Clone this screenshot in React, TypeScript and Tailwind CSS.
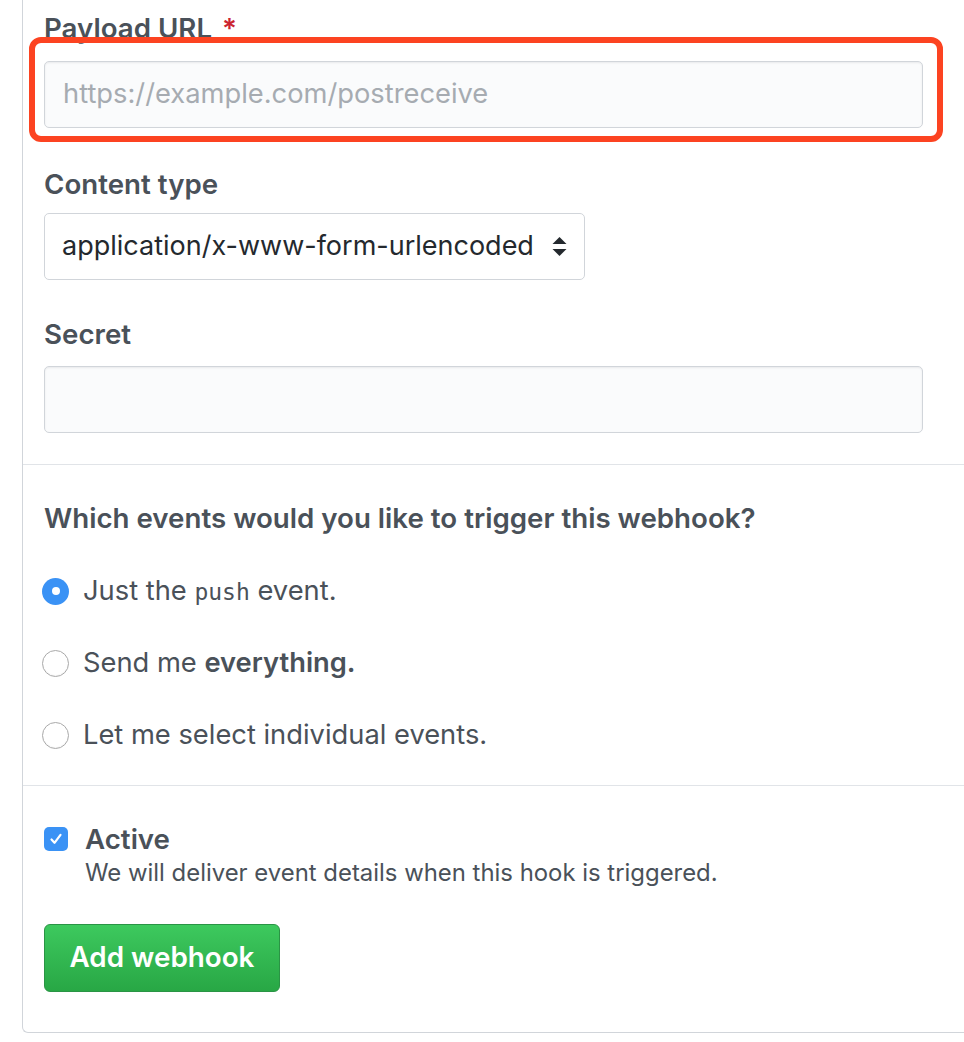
import React from "react";

const font = { fontFamily: "Inter, 'Noto Sans', 'Liberation Sans', sans-serif" };

function Radio({ checked }: { checked?: boolean }) {
  if (checked) {
    return (
      <div className="flex h-[27px] w-[27px] shrink-0 items-center justify-center rounded-full bg-[#3a92f5]">
        <div className="h-[8px] w-[8px] rounded-full bg-white" />
      </div>
    );
  }
  return (
    <div className="h-[27px] w-[27px] shrink-0 rounded-full border border-[#a9a9a9] bg-white shadow-[inset_0_-1px_1px_rgba(0,0,0,0.04)]" />
  );
}

export default function App() {
  return (
    <div className="relative h-[1042px] w-[964px] overflow-hidden bg-white" style={font}>
      <div className="ml-[22px] w-[960px] rounded-bl-[6px] border-b border-l border-[#d1d5da]">
        {/* Section 1 */}
        <div className="border-b border-[#e1e4e8] pb-[31px] pl-[21px] pt-[12px]">
          <div className="flex h-[32px] items-center text-[27.7px] font-semibold leading-[32px] text-[#4a5159]">
            Payload URL <span className="ml-[10px] text-[#cb2431]">*</span>
          </div>
          <div className="mt-[17px] flex h-[67px] w-[879px] items-center rounded-[5px] border border-[#d1d5da] bg-[#fafbfc] pl-[18px] text-[27.3px] text-[#a6abb1] shadow-[inset_0_1px_2px_rgba(27,31,35,0.075)]">
            https://example.com/postreceive
          </div>
          <div className="mt-[40px] h-[32px] text-[27.7px] font-semibold leading-[32px] text-[#4a5159]">Content type</div>
          <div className="mt-[13px] flex h-[67px] w-[541px] items-center justify-between rounded-[5px] border border-[#d1d5da] bg-white pl-[17px] pr-[17px] text-[27px] text-[#24292e]">
            <span>application/x-www-form-urlencoded</span>
            <svg width="15" height="20" viewBox="0 0 15 20" className="shrink-0">
              <path d="M7.5 0 L14.5 7 L0.5 7 Z" fill="#24292e" />
              <path d="M7.5 19 L14.5 12 L0.5 12 Z" fill="#24292e" />
            </svg>
          </div>
          <div className="mt-[38px] h-[32px] text-[27.7px] font-semibold leading-[32px] text-[#4a5159]">Secret</div>
          <div className="mt-[16px] h-[67px] w-[879px] rounded-[5px] border border-[#d1d5da] bg-[#fafbfc] shadow-[inset_0_1px_2px_rgba(27,31,35,0.075)]" />
        </div>

        {/* Section 2 */}
        <div className="border-b border-[#e1e4e8] pb-[34px] pl-[21px] pt-[37px]">
          <div className="h-[32px] text-[27.7px] font-semibold leading-[32px] text-[#4a5159]">
            Which events would you like to trigger this webhook?
          </div>
          <div className="mt-[41px] flex h-[32px] items-center gap-[14px] text-[27.3px] leading-[32px] text-[#4a5159]">
            <div className="-ml-[2px]"><Radio checked /></div>
            <span>
              Just the <span className="text-[23px]" style={{ fontFamily: "'DejaVu Sans Mono', 'Liberation Mono', monospace" }}>push</span> event.
            </span>
          </div>
          <div className="mt-[40px] flex h-[32px] items-center gap-[14px] text-[27.3px] leading-[32px] text-[#4a5159]">
            <div className="-ml-[2px]"><Radio /></div>
            <span>
              Send me <span className="font-semibold">everything.</span>
            </span>
          </div>
          <div className="mt-[40px] flex h-[32px] items-center gap-[14px] text-[27.3px] leading-[32px] text-[#4a5159]">
            <div className="-ml-[2px]"><Radio /></div>
            <span>Let me select individual events.</span>
          </div>
        </div>

        {/* Section 3 */}
        <div className="pb-[40px] pl-[21px] pt-[37px]">
          <div className="flex h-[32px] items-center gap-[17px]">
            <div className="flex h-[24px] w-[24px] items-center justify-center rounded-[5px] bg-[#3a92f5]">
              <svg width="16" height="16" viewBox="0 0 16 16">
                <path d="M3.5 8.5 L6.5 11.8 L12.5 3.8" stroke="white" strokeWidth="2.2" fill="none" strokeLinecap="round" strokeLinejoin="round" />
              </svg>
            </div>
            <span className="text-[27.7px] font-semibold leading-[32px] text-[#4a5159]">Active</span>
          </div>
          <div className="mt-[3px] pl-[41px] text-[23.9px] leading-[30px] text-[#4a5159]">
            We will deliver event details when this hook is triggered.
          </div>
          <button className="mt-[36px] flex h-[68px] w-[236px] items-center justify-center rounded-[6px] border border-[#2a9445] bg-gradient-to-b from-[#3dc95e] to-[#28a745] text-[27.8px] font-semibold text-white">
            Add webhook
          </button>
        </div>
      </div>

      {/* highlight overlay */}
      <div className="pointer-events-none absolute left-[29px] top-[37px] h-[105px] w-[914px] rounded-[12px] border-[6px] border-[#fc4321]" />
    </div>
  );
}
